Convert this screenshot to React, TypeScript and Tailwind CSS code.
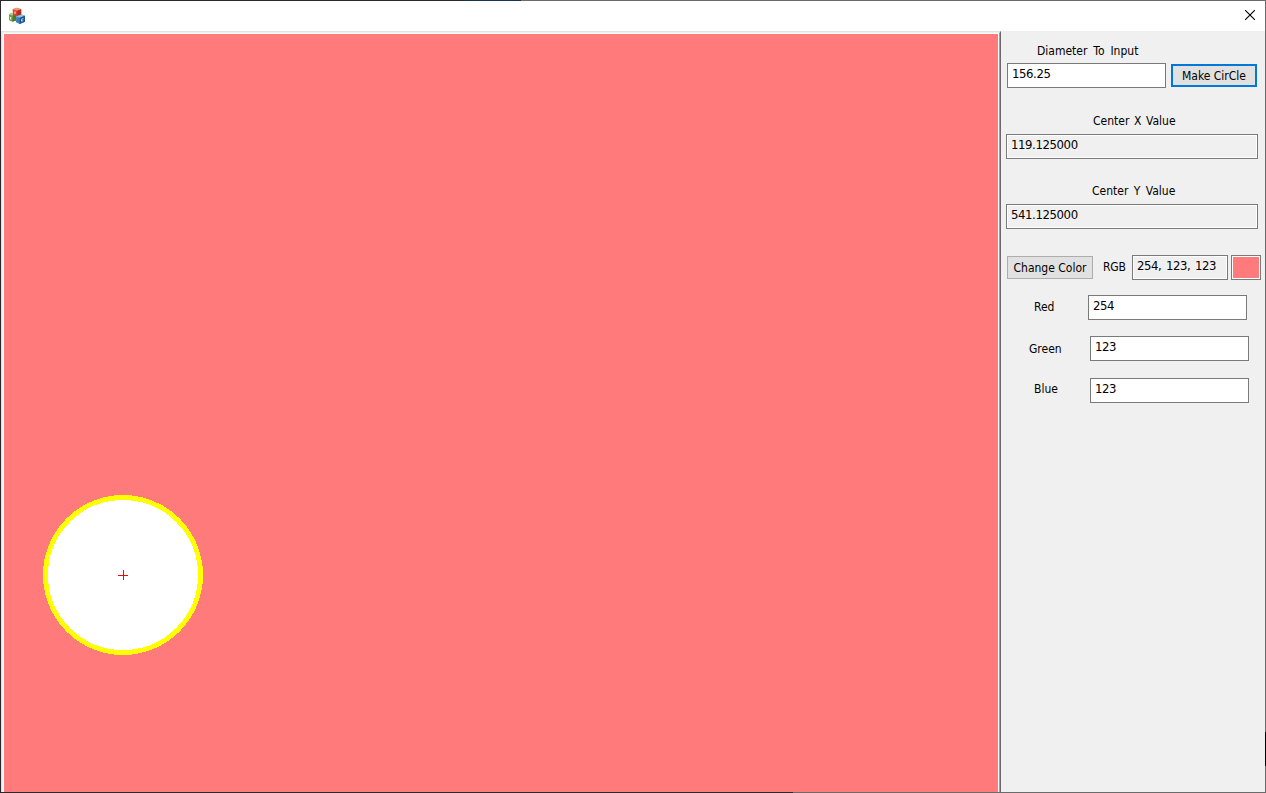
import { useState } from "react";
import type { ReactNode } from "react";

const INITIAL = { red: "254", green: "123", blue: "123" };

function AppIcon() {
  return (
    <svg className="h-[18px] w-[18px]" viewBox="0 0 18 18">
      <path d="M2 8.2 5 6.8 9 8v6.4l-3.6 1.4L2 14.2Z" fill="#76a03f" />
      <path d="M2 8.2 5 6.8 9 8 5.6 9.4Z" fill="#b5cc8a" />
      <path d="M5.6 9.4 9 8v6.4l-3.6 1.4Z" fill="#4f7a2a" />
      <path d="M3.6 11v2.4" stroke="#e3edcf" strokeWidth="1.2" />
      <path d="M5.6 3.2 10 1.8l4.2 1.4v5.6L10 10.4 6 8.8Z" fill="#d9432c" />
      <path d="M5.6 3.2 10 1.8l4.2 1.4-4 1.6Z" fill="#f09a82" />
      <path d="M10.2 4.8l4-1.6v5.6L10 10.4Z" fill="#b52e20" />
      <path d="M8 5.4v2.4" stroke="#f8cdbf" strokeWidth="1.4" />
      <path d="M9.2 10.2 14.6 8.6 18 9.8v6l-5.4 2.2-3.6-1.8Z" fill="#3b7fbd" />
      <path d="M9.2 10.2 14.6 8.6 18 9.8l-5.2 2Z" fill="#93c2e6" />
      <path d="M12.8 11.8 18 9.8v6L12.6 18Z" fill="#1d5593" />
      <path d="M14.6 13.2 16.4 12.6M14.6 13.2v2l1.6-.6" fill="none" stroke="#b9d8f0" strokeWidth="1" />
    </svg>
  );
}

function CloseIcon() {
  return (
    <svg className="h-[10px] w-[10px]" viewBox="0 0 10 10">
      <path d="M0 0 10 10M10 0 0 10" stroke="#000" strokeWidth="1.1" />
    </svg>
  );
}

function Label({ className, children }: { className: string; children: ReactNode }) {
  return <div className={`h-4 shrink-0 whitespace-nowrap text-[12px] leading-4 ${className}`}>{children}</div>;
}

const field =
  "block h-[25px] shrink-0 rounded-none border border-[#7a7a7a] pl-1 text-[13px] leading-4 tracking-[-0.4px] text-black outline-none";

function Readout({ className, children }: { className: string; children: ReactNode }) {
  return (
    <div
      className={`${field} bg-[#f0f0f0] pt-[2px] whitespace-nowrap shadow-[inset_0_0_0_1px_#fff] [word-spacing:1.2px] ${className}`}
    >
      {children}
    </div>
  );
}

function Entry({ value, onChange }: { value: string; onChange: (value: string) => void }) {
  return (
    <input
      className={`${field} w-[159px] bg-white pt-px pb-[6px]`}
      value={value}
      onChange={(e) => onChange(e.target.value)}
    />
  );
}

function Canvas() {
  return (
    <svg className="block h-[758px] w-[994px] bg-[#ff7b7b]" viewBox="0 0 994 758" shapeRendering="crispEdges">
      <circle cx="119" cy="541" r="77.5" fill="#fff" stroke="#ffff00" strokeWidth="5" />
      <path d="M114 541.5h10M119.5 536v10" stroke="#ff0000" strokeWidth="1" />
    </svg>
  );
}

export default function App() {
  const [diameter, setDiameter] = useState("156.25");
  const [rgb, setRgb] = useState(INITIAL);

  return (
    <div className="flex h-[793px] w-[1266px] flex-col overflow-hidden bg-white font-['DejaVu_Sans_Condensed','DejaVu_Sans',sans-serif] text-black [font-stretch:condensed]">
      <div className="flex h-px shrink-0">
        <div className="w-[465px] bg-[#2b272b]" />
        <div className="w-14 bg-[#17344f]" />
        <div className="flex-1 bg-[#6b6b6b]" />
      </div>
      <div className="flex h-[791px] shrink-0">
        <div className="w-px shrink-0 bg-[#2b272b]" />
        <div className="flex w-[1264px] shrink-0 flex-col">
          <header className="flex h-[30px] shrink-0 items-start justify-between pt-[5px] pr-[10px] pl-[6px]">
            <AppIcon />
            <button className="pt-1" aria-label="Close">
              <CloseIcon />
            </button>
          </header>
          <main className="flex h-[761px]">
            <section className="w-[1000px] shrink-0 border-t border-r border-l border-t-[#e3e3e3] border-r-[#696969] border-l-[#e3e3e3]">
              <div className="h-[760px] border-t border-r border-l border-t-[#f0f0f0] border-r-[#a0a0a0] border-l-[#f0f0f0]">
                <div className="h-[759px] border-t border-r border-l border-white">
                  <Canvas />
                </div>
              </div>
            </section>
            <aside className="w-[264px] shrink-0 bg-[#f0f0f0] pt-3 pl-[5px]">
              <Label className="ml-[31px] [word-spacing:2.5px]">Diameter To Input</Label>
              <div className="mt-1 ml-px flex items-center gap-[5px]">
                <Entry value={diameter} onChange={setDiameter} />
                <button className="h-[23px] w-[86px] border-2 border-[#0078d7] bg-[#e1e1e1] pt-px text-[12px] leading-[18px] whitespace-nowrap">
                  Make CirCle
                </button>
              </div>
              <Label className="mt-[25px] ml-[87px] [word-spacing:1.2px]">Center X Value</Label>
              <Readout className="mt-[5px] w-[252px]">119.125000</Readout>
              <Label className="mt-6 ml-[86px] [word-spacing:2px]">Center Y Value</Label>
              <Readout className="mt-[5px] w-[252px]">541.125000</Readout>
              <div className="mt-[26px] ml-px flex items-center">
                <button className="h-[23px] w-[86px] border border-[#adadad] bg-[#e1e1e1] pt-px text-[12px] leading-[20px] whitespace-nowrap">
                  Change Color
                </button>
                <Label className="mb-[2px] ml-[10px] w-[29px] tracking-[-0.2px]">RGB</Label>
                <Readout className="w-24">254, 123, 123</Readout>
                <div className="ml-[3px] h-[25px] w-[30px] border border-[#7a7a7a] bg-[#ff7b7b] shadow-[inset_0_0_0_1px_#fff]" />
              </div>
              <div className="mt-[15px] flex">
                <Label className="mt-1 ml-7 w-[54px]">Red</Label>
                <Entry value={rgb.red} onChange={(red) => setRgb({ ...rgb, red })} />
              </div>
              <div className="mt-4 flex">
                <Label className="mt-[5px] ml-[23px] w-[61px]">Green</Label>
                <Entry value={rgb.green} onChange={(green) => setRgb({ ...rgb, green })} />
              </div>
              <div className="mt-[17px] flex">
                <Label className="mt-[3px] ml-7 w-14">Blue</Label>
                <Entry value={rgb.blue} onChange={(blue) => setRgb({ ...rgb, blue })} />
              </div>
            </aside>
          </main>
        </div>
        <div className="flex w-px shrink-0 flex-col bg-[#6b6b6b]">
          <div className="mt-[731px] h-[34px] bg-black" />
        </div>
      </div>
      <div className="flex h-px shrink-0">
        <div className="w-[793px] bg-[#2b272b]" />
        <div className="flex-1 bg-[#6b6b6b]" />
      </div>
    </div>
  );
}
